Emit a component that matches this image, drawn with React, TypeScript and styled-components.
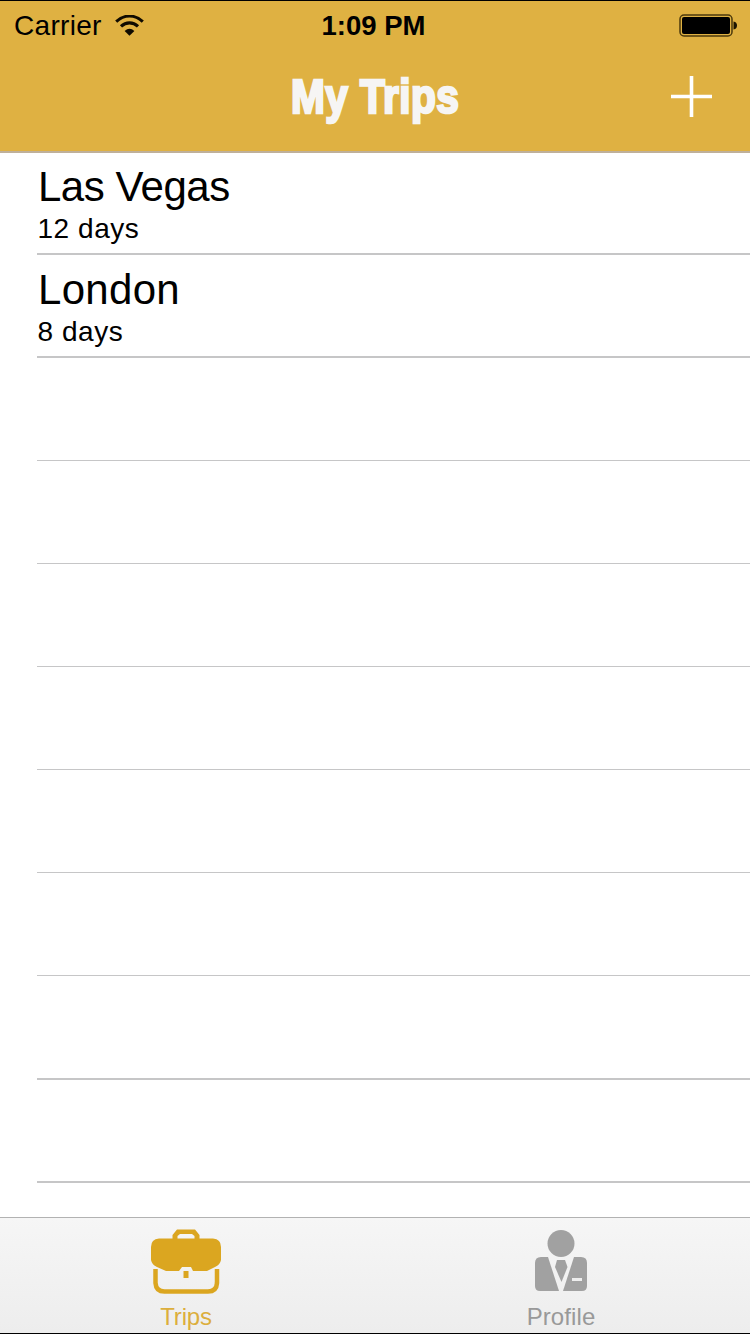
import React from "react";
import styled, { createGlobalStyle } from "styled-components";

const Global = createGlobalStyle`
  * { box-sizing: border-box; }
  body { margin: 0; background: #fff; font-family: "Liberation Sans", Arial, sans-serif; }
`;
const Screen = styled.main`
  width: 750px; height: 1334px; display: flex; flex-direction: column; overflow: hidden;
  background: #fff; border-top: 1px solid #000; border-bottom: 1px solid #000; color: #000;
`;
const Header = styled.header`
  flex: none; height: 152px; background: #dfb142; border-bottom: 2px solid #bfb09a;
`;
const StatusBar = styled.div`
  height: 48px; padding: 0 13px 0 14px; display: grid; grid-template-columns: 1fr auto 1fr; align-items: center;
`;
const Carrier = styled.div`
  display: flex; align-items: center; gap: 13px;
`;
const StatusText = styled.span<{ $bold?: boolean; $width: number }>`
  display: block; font-size: ${(p) => (p.$bold ? 27.5 : 28)}px; line-height: 30px; padding-top: 2px;
  white-space: nowrap; font-weight: ${(p) => (p.$bold ? 700 : 400)};
  letter-spacing: ${(p) => (p.$bold ? 0 : 0.3)}px;
  width: ${(p) => p.$width}px;
`;
const Battery = styled.svg`
  justify-self: end; display: block;
`;
const NavBar = styled.div`
  height: 96px; display: grid; grid-template-columns: 1fr auto 1fr; align-items: center; padding: 0 38px;
`;
const Title = styled.h1`
  grid-column: 2; margin: 0; width: 168px; height: 60px; font-size: 47.5px; line-height: 60px;
  color: #f6f5f4; font-weight: 700; white-space: nowrap; letter-spacing: 0.5px;
  -webkit-text-stroke: 2.6px #f6f5f4; transform: scaleX(0.855); transform-origin: 0 50%;
`;
const AddButton = styled.button`
  justify-self: end; margin-top: -1px; padding: 0; border: 0; background: none; display: block; line-height: 0;
`;
const List = styled.ul`
  flex: 1; min-height: 0; margin: 0; padding: 0 0 0 37px; list-style: none; overflow: hidden;
`;
const Row = styled.li<{ $height: number; $line: number }>`
  height: ${(p) => p.$height}px; padding-top: ${(p) => p.$height - 91}px;
  border-bottom: ${(p) => p.$line}px solid #c6c6c7;
`;
const City = styled.div<{ $tracking: number }>`
  font-size: 42px; line-height: 46px; padding-left: 1px; letter-spacing: ${(p) => p.$tracking}px;
`;
const Days = styled.div`
  font-size: 28px; line-height: 30px; padding-top: 4px; letter-spacing: 0.55px; padding-left: 0.5px;
`;
const TabBar = styled.nav`
  flex: none; height: 116px; display: grid; grid-template-columns: 1fr 1fr;
  border-top: 1px solid #b2b2b2; background: linear-gradient(#f6f6f6, #ededed);
`;
const Tab = styled.div<{ $active?: boolean }>`
  display: flex; flex-direction: column; align-items: center; padding: 10px 3px 0 0;
  color: ${(p) => (p.$active ? "#dba620" : "#a1a1a1")};
  svg { display: block; }
`;
const TabLabel = styled.span<{ $active?: boolean }>`
  font-size: 24px; line-height: 28px; margin-top: 7px;
  letter-spacing: ${(p) => (p.$active ? -0.2 : 0.1)}px;
  color: ${(p) => (p.$active ? "#dcae3c" : "#999")};
`;

const trips = [
  { city: "Las Vegas", days: "12 days", tracking: -0.5 },
  { city: "London", days: "8 days", tracking: 0.3 },
];
const rows = [
  { h: 102, l: 2 }, { h: 103, l: 2 }, { h: 103, l: 1 }, { h: 103, l: 1 }, { h: 103, l: 1 },
  { h: 103, l: 1 }, { h: 103, l: 1 }, { h: 103, l: 1 }, { h: 104, l: 2 }, { h: 103, l: 2 },
];

export default function App() {
  return (
    <>
      <Global />
      <Screen>
        <Header>
          <StatusBar>
            <Carrier>
              <StatusText $width={88}>Carrier</StatusText>
              <svg width="29" height="21" viewBox="0 0 29 21" fill="none" stroke="#100b00">
                <path d="M1.2 6.6C9 -0.8 20 -0.8 27.8 6.6" strokeWidth="3" />
                <path d="M6 11.4C11 6.8 18 6.8 23 11.4" strokeWidth="3.2" />
                <path d="M14.5 20.8L9.6 16Q14.5 11.6 19.4 16Z" fill="#100b00" stroke="none" />
              </svg>
            </Carrier>
            <StatusText $bold $width={108}>1:09 PM</StatusText>
            <Battery width="58" height="23" viewBox="0 0 58 23">
              <rect x="1" y="1" width="52" height="21" rx="4" fill="none" stroke="#4b390c" strokeWidth="1.5" />
              <rect x="3" y="3" width="48" height="17" rx="2" fill="#000" />
              <path d="M54.5 7.5Q58 8 58 11.5T54.5 15.5Z" fill="#1c1400" />
            </Battery>
          </StatusBar>
          <NavBar>
            <Title>My Trips</Title>
            <AddButton aria-label="Add trip">
              <svg width="41" height="41" viewBox="0 0 41 41" stroke="#fff" strokeWidth="3.6">
                <path d="M0 20.5H41M20.5 0V41" />
              </svg>
            </AddButton>
          </NavBar>
        </Header>
        <List>
          {rows.map((r, i) => (
            <Row key={i} $height={r.h} $line={r.l}>
              {trips[i] && (
                <>
                  <City $tracking={trips[i].tracking}>{trips[i].city}</City>
                  <Days>{trips[i].days}</Days>
                </>
              )}
            </Row>
          ))}
        </List>
        <TabBar>
          <Tab $active>
            <svg width="70" height="68" viewBox="0 0 70 68" fill="currentColor">
              <path d="M21.5 11V7L26 1.500H44L48.500 7V11H43.500V8L41 6H29L26.500 8V11Z" />
              <path d="M8 10.500H62Q70 11 70 19V32Q69 37 64 39L56 43H42L40 39H31L28 43H15L6 39Q1 37 0 32V19Q0 11 8 10.500Z" />
              <rect x="32.500" y="43" width="5" height="7" />
              <path d="M4.500 41V55Q5 63.500 13.500 63.500H57Q65.500 63.500 66 55V41" fill="none" stroke="currentColor" strokeWidth="4.500" />
            </svg>
            <TabLabel $active>Trips</TabLabel>
          </Tab>
          <Tab>
            <svg width="54" height="68" viewBox="0 0 54 68" fill="currentColor">
              <circle cx="27" cy="15.500" r="13.500" />
              <path d="M7 29H14L25 63H6Q1 63 1 58V35Q1 29 7 29Z" />
              <path d="M40 29H47Q53 29 53 35V58Q53 63 48 63H29Z" />
              <path d="M23 32H31L33.500 39L27.500 54L21 39Z" />
              <rect x="38" y="50" width="10" height="3" fill="#eee" />
            </svg>
            <TabLabel>Profile</TabLabel>
          </Tab>
        </TabBar>
      </Screen>
    </>
  );
}
